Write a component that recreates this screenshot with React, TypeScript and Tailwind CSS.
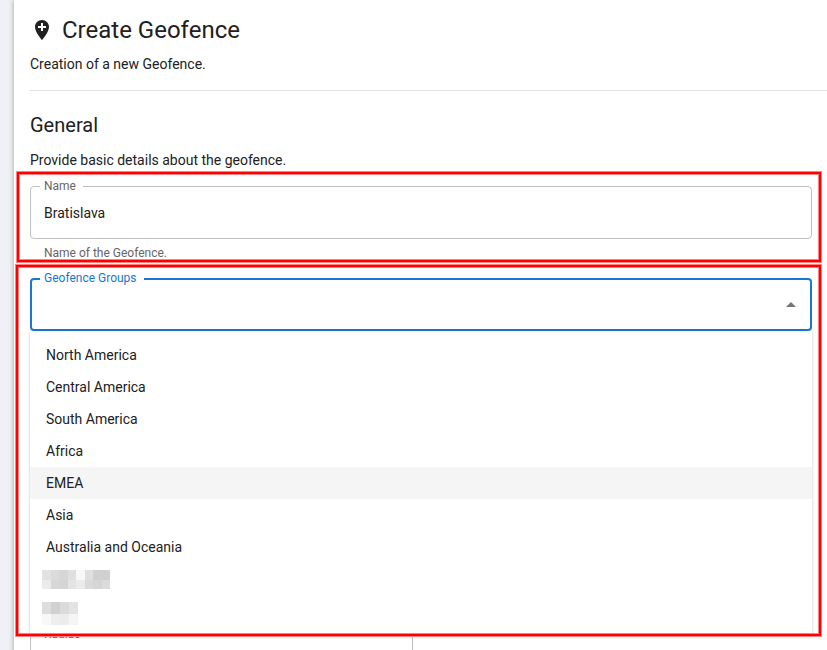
import React, { useState } from 'react';
import { MdAddLocation, MdArrowDropUp } from 'react-icons/md';

const groups = [
    "North America",
    "Central America",
    "South America",
    "Africa",
    "EMEA",
    "Asia",
    "Australia and Oceania"
];

const maskedGroups = [
    {
        width: 68,
        height: 19,
        rows: [
            ["#e2e2e2", "#dbdbdb", "#d6d6d6", "#dfdfdf", "#f8f8f8", "#dfdfdf", "#d0d0d0", "#d0d0d0"],
            ["#ebebeb", "#d7d7d7", "#d5d5d5", "#e4e4e4", "#ebebeb", "#dadada", "#d5d5d5", "#dbdbdb"]
        ]
    },
    {
        width: 36,
        height: 23,
        rows: [
            ["#dddddd", "#d1d1d1", "#dbdbdb", "#e3e3e3"],
            ["#f8f8f8", "#eeeeee", "#ececec", "#f5f5f5"]
        ]
    }
];

const MaskedName: React.FC<{ width: number; height: number; rows: string[][] }> = ({ width, height, rows }) => (
    <svg width={width} height={height} viewBox={`0 0 ${rows[0].length} 2`} preserveAspectRatio="none" shapeRendering="crispEdges" aria-hidden="true">
        {rows.map((row, y) => row.map((fill, x) => (
            <rect key={`${x}-${y}`} x={x} y={y} width="1" height="1" fill={fill} />
        )))}
    </svg>
);

// Red annotation frame, drawn over everything it surrounds
const Highlight: React.FC<{ className: string }> = ({ className }) => (
    <div className={`absolute z-20 pointer-events-none border border-[#ff8080] ${className}`}>
        <div className="h-full border-2 border-[#ff0000]">
            <div className="h-full border border-[#ff8080]" />
        </div>
    </div>
);

const App: React.FC = () => {
    const [name, setName] = useState("Bratislava");
    const [query, setQuery] = useState("");

    return (
        <div className="h-screen overflow-hidden bg-[#eff1f6] pl-3.5 font-['Roboto',sans-serif] text-sm text-[#212121]">
            <main className="min-h-full bg-white pl-4 shadow-[0_0_5px_rgba(0,0,0,0.35)]">
                <header className="border-b border-[#e0e0e0] pt-3.5 pb-4">
                    <div className="flex items-center gap-2">
                        <MdAddLocation className="size-6" />
                        <h1 className="text-2xl">Create Geofence</h1>
                    </div>
                    <p className="mt-2">Creation of a new Geofence.</p>
                </header>

                <section className="pt-5 pr-[15px]">
                    <h2 className="text-xl">General</h2>
                    <p className="mt-[11px]">Provide basic details about the geofence.</p>

                    <div className="relative mt-4">
                        <input
                            id="name"
                            value={name}
                            onChange={(e) => setName(e.target.value)}
                            aria-describedby="name-help"
                            className="block h-[53px] w-full rounded border border-[#c0c0c0] px-[13px] outline-none"
                        />
                        <label htmlFor="name" className="absolute -top-2 left-2.5 bg-white pr-[7px] pl-1 text-xs text-[#666666]">Name</label>
                        <p id="name-help" className="mt-1.5 pl-3.5 text-xs text-[#666666]">Name of the Geofence.</p>
                        <Highlight className="-top-[15px] -right-2.5 -bottom-[2px] -left-3.5" />
                    </div>

                    <div className="relative mt-[17px]">
                        <input
                            id="groups"
                            role="combobox"
                            aria-expanded="true"
                            aria-controls="groups-list"
                            value={query}
                            onChange={(e) => setQuery(e.target.value)}
                            className="block h-[53px] w-full rounded border-2 border-[#1976d2] px-3 outline-none"
                        />
                        <label htmlFor="groups" className="absolute -top-2 left-2.5 bg-white pr-[7px] pl-1 text-xs text-[#1976d2]">Geofence Groups</label>
                        <button type="button" aria-label="Close" className="absolute top-[15px] right-[9px] text-[#757575]">
                            <MdArrowDropUp className="size-6" />
                        </button>

                        <ul id="groups-list" role="listbox" className="absolute top-full right-0 left-0 z-10 bg-white py-2 shadow-[0_1px_3px_rgba(0,0,0,0.22)]">
                            {groups.map((group) => (
                                <li key={group} role="option" aria-selected="false" className={`flex h-8 items-center px-4 ${group === "EMEA" ? "bg-[#f5f5f5]" : ""}`}>
                                    {group}
                                </li>
                            ))}
                            {maskedGroups.map((masked) => (
                                <li key={masked.width} role="option" aria-selected="false" className="h-8 px-3 pt-[7px]">
                                    <MaskedName {...masked} />
                                </li>
                            ))}
                        </ul>
                        <Highlight className="-top-3.5 -right-2.5 -bottom-[306px] -left-[15px]" />
                    </div>

                    <div className="relative mt-[303px] w-[383px]">
                        <input id="radius" className="block h-[53px] w-full rounded border border-[#c0c0c0] px-[13px] outline-none" />
                        <label htmlFor="radius" className="absolute -top-2 left-2.5 bg-white pr-[7px] pl-1 text-xs text-[#666666]">Radius</label>
                    </div>
                </section>
            </main>
        </div>
    );
};

export default App;
